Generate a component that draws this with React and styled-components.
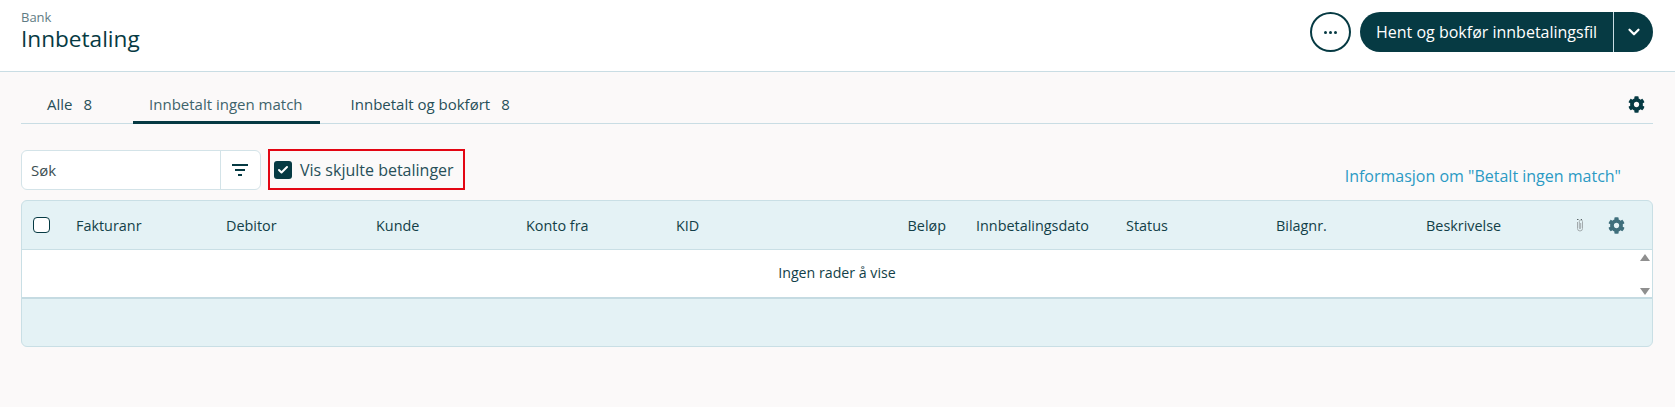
import styled, { createGlobalStyle } from 'styled-components'
import { FaCog } from 'react-icons/fa'
import { ChevronDown, Check } from 'lucide-react'

const GlobalStyle = createGlobalStyle`
  html, body {
    margin: 0;
    padding: 0;
    background: #fbf9f9;
    font-family: "Open Sans", "Noto Sans", sans-serif;
    color: #123f48;
  }
  * { box-sizing: border-box; }
`

const Page = styled.div`
  width: 1675px;
  height: 407px;
  overflow: hidden;
`

const Header = styled.header`
  height: 72px;
  background: #fff;
  border-bottom: 1px solid #c9dde4;
  padding: 0 22px 0 21px;
  display: flex;
  align-items: flex-start;
  justify-content: space-between;
`

const TitleBlock = styled.div`
  padding-top: 8px;
`

const Crumb = styled.div`
  font-size: 13px;
  line-height: 18px;
  color: #5f7c84;
`

const Title = styled.h1`
  margin: -2px 0 0;
  font-size: 22.6px;
  line-height: 30px;
  font-weight: 400;
  color: #063a43;
`

const Actions = styled.div`
  display: flex;
  gap: 9px;
  padding-top: 12px;
`

const RoundButton = styled.button`
  width: 41px;
  height: 40px;
  border: 2px solid #063a43;
  border-radius: 50%;
  background: #fff;
  padding: 0;
  display: flex;
  align-items: center;
  justify-content: center;
  gap: 2px;
`

const Dot = styled.span`
  width: 3px;
  height: 3px;
  border-radius: 50%;
  background: #063a43;
`

const SplitButton = styled.div`
  width: 293px;
  height: 40px;
  border-radius: 20px;
  background: #063a43;
  color: #fff;
  display: flex;
  align-items: center;
`

const SplitLabel = styled.span`
  flex: 1;
  height: 100%;
  display: flex;
  align-items: center;
  padding-left: 16px;
  font-size: 16px;
  border-right: 1px solid #c9dde4;
`

const SplitArrow = styled.span`
  width: 39px;
  display: flex;
  align-items: center;
  justify-content: center;
`

const Main = styled.main`
  padding: 0 22px 0 21px;
`

const Tabs = styled.nav`
  height: 52px;
  border-bottom: 1px solid #c9dde4;
  display: flex;
  align-items: flex-end;
`

const Tab = styled.div`
  height: 52px;
  margin-bottom: -1px;
  padding: 22px ${(p) => p.$padRight}px 0 ${(p) => p.$padLeft}px;
  font-size: 15px;
  line-height: 20px;
  color: ${(p) => (p.$active ? '#3e636b' : '#274f58')};
  border-bottom: 3px solid ${(p) => (p.$active ? '#063a43' : 'transparent')};
  white-space: nowrap;
`

const Count = styled.span`
  margin-left: 11px;
`

const TabsGear = styled.span`
  margin-left: auto;
  padding: 0 8px 10px 0;
  font-size: 17px;
  line-height: 0;
  color: #063a43;
`

const Toolbar = styled.div`
  height: 76px;
  display: flex;
  align-items: flex-start;
  padding-top: 26px;
`

const SearchBox = styled.div`
  flex: none;
  width: 240px;
  height: 40px;
  background: #fff;
  border: 1px solid #d3e3e8;
  border-radius: 6px;
  display: flex;
  align-items: center;
`

const SearchText = styled.span`
  flex: 1;
  padding-left: 9px;
  font-size: 15px;
  color: #3d4f53;
`

const FilterButton = styled.span`
  width: 40px;
  height: 100%;
  padding-right: 2px;
  border-left: 1px solid #d3e3e8;
  display: flex;
  align-items: center;
  justify-content: center;
`

const ShowHidden = styled.label`
  flex: none;
  width: 197px;
  height: 41px;
  margin: -1px 0 0 7px;
  border: 2px solid #e30613;
  display: flex;
  align-items: center;
  padding-left: 4px;
  gap: 8px;
  font-size: 16px;
  white-space: nowrap;
  color: #274f58;
`

const CheckBox = styled.span`
  width: 18px;
  height: 18px;
  border-radius: 3px;
  background: #063a43;
  color: #fff;
  display: flex;
  align-items: center;
  justify-content: center;
`

const InfoLink = styled.a`
  margin: 16px 0 0 auto;
  padding-right: 32px;
  font-size: 16px;
  line-height: 20px;
  white-space: nowrap;
  color: #2b9ac4;
`

const Table = styled.section`
  height: 147px;
  width: 1632px;
  background: #e4f2f5;
  border: 1px solid #c9dfe5;
  border-radius: 6px;
  overflow: hidden;
`

const HeadRow = styled.div`
  height: 49px;
  border-bottom: 1px solid #c9dfe5;
  display: grid;
  grid-template-columns: 39px repeat(10, 150px) 1fr;
  align-items: center;
  font-size: 14.4px;
  color: #123f48;
`

const SelectCell = styled.span`
  padding-left: 11px;
`

const HeadCheck = styled.span`
  display: block;
  width: 17px;
  height: 16px;
  background: #fff;
  border: 1px solid #063a43;
  border-radius: 4px;
`

const HeadCell = styled.span`
  padding: 0 15px;
  text-align: ${(p) => (p.$right ? 'right' : 'left')};
`

const HeadIcons = styled.span`
  display: flex;
  align-items: center;
  padding-left: 15px;
  gap: 24px;
`

const HeadGear = styled.span`
  font-size: 17px;
  line-height: 0;
  color: #3f6f7c;
`

const BodyRow = styled.div`
  height: 49px;
  background: #fff;
  border-bottom: 2px solid #c5dbe2;
  display: flex;
`

const EmptyText = styled.div`
  flex: 1;
  padding: 14px 0 0 16px;
  text-align: center;
  font-size: 14.2px;
  line-height: 18px;
  color: #123f48;
`

const Scroll = styled.div`
  width: 16px;
  padding: 4px 2px 2px 4px;
  display: flex;
  flex-direction: column;
  align-items: center;
  justify-content: space-between;
`

const ScrollArrow = styled.span`
  width: 0;
  height: 0;
  border-left: 5px solid transparent;
  border-right: 5px solid transparent;
  ${(p) => (p.$down ? 'border-top: 7px solid #8f8f8f;' : 'border-bottom: 7px solid #8f8f8f;')}
`

const columns = ['Fakturanr', 'Debitor', 'Kunde', 'Konto fra', 'KID']
const columnsAfter = ['Innbetalingsdato', 'Status', 'Bilagnr.', 'Beskrivelse']

// small grey paperclip used as the attachment column header
const ClipIcon = () => (
  <svg width="8" height="14" viewBox="0 0 8 14" fill="none">
    <path
      d="M1.5 4v6.5a2.5 2.5 0 0 0 5 0V3.5a1.6 1.6 0 0 0-3.2 0v6.5a.7.7 0 0 0 1.4 0V5"
      stroke="#a3abad"
      strokeWidth="1"
    />
    <path d="M1 1.5h1.5M5 1.5h1" stroke="#5a6668" strokeWidth="1.2" />
  </svg>
)

export default function App() {
  return (
    <Page>
      <GlobalStyle />
      <Header>
        <TitleBlock>
          <Crumb>Bank</Crumb>
          <Title>Innbetaling</Title>
        </TitleBlock>
        <Actions>
          <RoundButton>
            <Dot />
            <Dot />
            <Dot />
          </RoundButton>
          <SplitButton>
            <SplitLabel>Hent og bokfør innbetalingsfil</SplitLabel>
            <SplitArrow>
              <ChevronDown size={18} strokeWidth={3} />
            </SplitArrow>
          </SplitButton>
        </Actions>
      </Header>
      <Main>
        <Tabs>
          <Tab $padLeft={26} $padRight={41}>
            Alle<Count>8</Count>
          </Tab>
          <Tab $active $padLeft={16} $padRight={17}>
            Innbetalt ingen match
          </Tab>
          <Tab $padLeft={31} $padRight={16}>
            Innbetalt og bokført<Count>8</Count>
          </Tab>
          <TabsGear>
            <FaCog />
          </TabsGear>
        </Tabs>
        <Toolbar>
          <SearchBox>
            <SearchText>Søk</SearchText>
            <FilterButton>
              <svg width="16" height="12" viewBox="0 0 16 12">
                <path d="M0 1h16M3 6h10M6 11h4" stroke="#063a43" strokeWidth="2" />
              </svg>
            </FilterButton>
          </SearchBox>
          <ShowHidden>
            <CheckBox>
              <Check size={12} strokeWidth={4} />
            </CheckBox>
            Vis skjulte betalinger
          </ShowHidden>
          <InfoLink>Informasjon om "Betalt ingen match"</InfoLink>
        </Toolbar>
        <Table>
          <HeadRow>
            <SelectCell>
              <HeadCheck />
            </SelectCell>
            {columns.map((c) => (
              <HeadCell key={c}>{c}</HeadCell>
            ))}
            <HeadCell $right>Beløp</HeadCell>
            {columnsAfter.map((c) => (
              <HeadCell key={c}>{c}</HeadCell>
            ))}
            <HeadIcons>
              <ClipIcon />
              <HeadGear>
                <FaCog />
              </HeadGear>
            </HeadIcons>
          </HeadRow>
          <BodyRow>
            <EmptyText>Ingen rader å vise</EmptyText>
            <Scroll>
              <ScrollArrow />
              <ScrollArrow $down />
            </Scroll>
          </BodyRow>
        </Table>
      </Main>
    </Page>
  )
}
